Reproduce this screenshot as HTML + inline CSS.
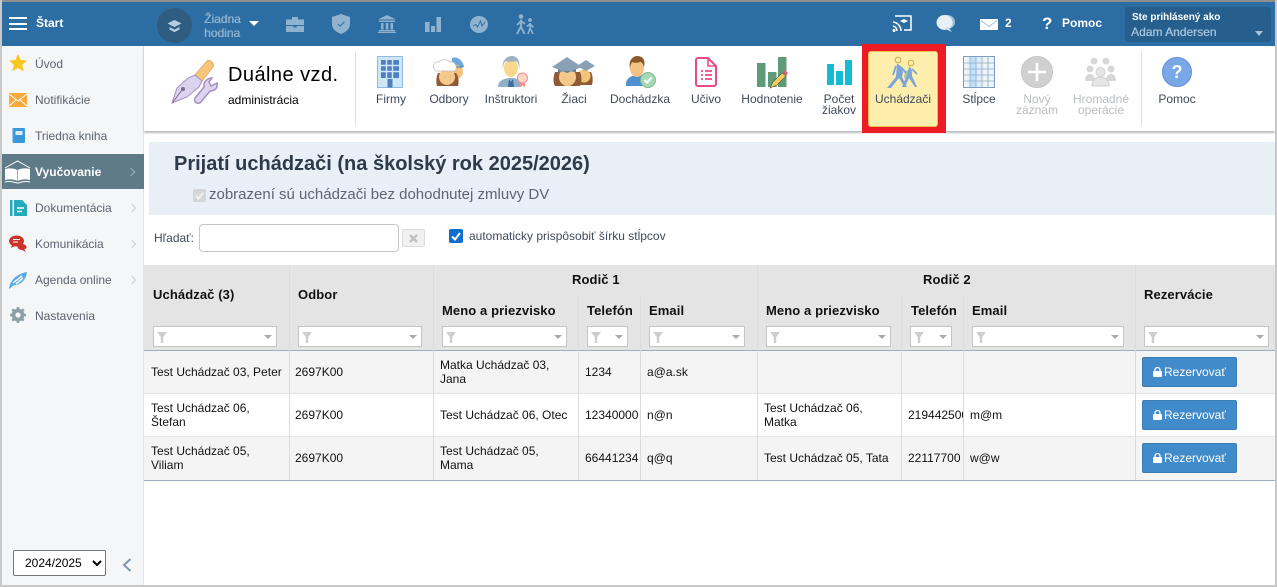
<!DOCTYPE html>
<html lang="sk"><head><meta charset="utf-8"><title>Uchádzači</title>
<style>
*{box-sizing:border-box}
html,body{margin:0;padding:0;width:1277px;height:587px;overflow:hidden;background:#fff;font-family:"Liberation Sans",Arial,sans-serif;color:#000}
.a{position:absolute}
.t{position:absolute;white-space:nowrap;line-height:14px}
svg{position:absolute;overflow:visible}
.side{font-size:12px;color:#5c6370;left:35px}
.rb{position:absolute;font-size:12px;color:#3f4a5a;text-align:center;line-height:12px;transform:translateX(-50%);white-space:nowrap}
.dis{color:#b9bcc0}
.h{position:absolute;font-size:13px;font-weight:bold;color:#111;white-space:nowrap;line-height:15px;letter-spacing:.1px}
.c{position:absolute;font-size:12px;color:#111;line-height:14px;white-space:nowrap}
.f{position:absolute;top:326px;height:21px;background:#fff;border:1px solid #c4c4c4}
.f:before{content:"";position:absolute;left:3px;top:5px;width:10px;height:11px;background:#cdcdcd;clip-path:polygon(0 0,100% 0,62% 45%,62% 100%,38% 100%,38% 45%)}
.f:after{content:"";position:absolute;right:4px;top:8px;border:4px solid transparent;border-top:4px solid #aaa;border-bottom:0}
.v{position:absolute;width:1px;background:#dcdcdc}
.btn{position:absolute;left:1142px;width:95px;height:30px;background:#428bca;border:1px solid #3b7eb6;border-radius:2px;color:#fff;font-size:12px;line-height:28px;padding-left:21px}
.chev{position:absolute;left:129px;width:6px;height:6px;border-top:1px solid #c9ced3;border-right:1px solid #c9ced3;transform:rotate(45deg)}
</style></head><body>
<!-- frame -->
<div class="a" style="left:0;top:0;width:1277px;height:2px;background:#8f8f8f"></div>
<div class="a" style="left:0;top:0;width:2px;height:587px;background:#c9c9c9"></div>
<div class="a" style="left:1275px;top:0;width:2px;height:587px;background:#c9c9c9"></div>
<div class="a" style="left:0;top:585px;width:1277px;height:2px;background:#c9c9c9"></div>
<!-- top bar -->
<div class="a" style="left:2px;top:2px;width:1273px;height:44px;background:#2c6ea3"></div>
<div class="a" style="left:9px;top:17px;width:18px;height:2px;background:#fff"></div>
<div class="a" style="left:9px;top:23px;width:18px;height:2px;background:#fff"></div>
<div class="a" style="left:9px;top:28px;width:18px;height:2px;background:#fff"></div>
<div class="t" style="left:36px;top:16px;font-size:12px;font-weight:bold;color:#fff">Štart</div>
<div class="a" style="left:157px;top:8px;width:35px;height:35px;border-radius:50%;background:#2f5d82"></div>
<svg style="left:157px;top:8px" width="35" height="35"><path d="M17.500 12l7 3.500-7 3.500-7-3.500z" fill="#b9cfe0"/><path d="M12.500 19l5 2.600 5-2.600v2.500l-5 2.600-5-2.600z" fill="#b9cfe0"/></svg>
<div class="t" style="left:204px;top:12px;font-size:12px;color:#8fb2cf;text-shadow:.4px 0 0 #8fb2cf">Žiadna</div>
<div class="t" style="left:204px;top:26px;font-size:12px;color:#8fb2cf;text-shadow:.4px 0 0 #8fb2cf">hodina</div>
<div class="a" style="left:249px;top:21px;border:5px solid transparent;border-top:5px solid #fff;border-bottom:0"></div>
<svg style="left:286px;top:17px" width="18" height="15"><path d="M6 2.500V0h6v2.500h6V8H0V2.500z" fill="#8fb2cf"/><path d="M0 9h7.500v1.500h3V9H18v6H0z" fill="#8fb2cf"/></svg>
<svg style="left:332px;top:14px" width="18" height="20"><path d="M9 0l9 3v7c0 5-4 8-9 10C4 18 0 15 0 10V3z" fill="#8fb2cf"/><path d="M6 10l2.200 2.200L12.500 7.500" stroke="#2c6ea3" fill="none"/></svg>
<svg style="left:378px;top:15px" width="18" height="18"><path d="M9 0l9 4.500H0zM1 5.500h16V7H1zM3 8h2.500v6.500H3zM7.800 8h2.500v6.500H7.800zM12.500 8H15v6.500h-2.500zM1 15h16v1.300H1zM0 16.700h18V18H0z" fill="#8fb2cf"/></svg>
<svg style="left:425px;top:17px" width="16" height="15"><path d="M0 5h4.500v10H0zM6 9h4v6H6zM11.500 0H16v15h-4.500z" fill="#8fb2cf"/></svg>
<svg style="left:470px;top:16px" width="18" height="17"><ellipse cx="9" cy="8.500" rx="9" ry="8.500" fill="#8fb2cf"/><path d="M3 10l3-1.500 1.500 2.500 3-6 1.500 5 3-4" fill="none" stroke="#2c6ea3" stroke-width=".9"/></svg>
<svg style="left:515px;top:14px" width="20" height="20" fill="none" stroke="#8fb2cf"><circle cx="6" cy="2.500" r="2.300" fill="#8fb2cf" stroke="none"/><circle cx="15" cy="6" r="1.900" fill="#8fb2cf" stroke="none"/><path d="M6 5.500v7.500M6 7l-4 4M6 7l4 3M6 12.500l-4 7.500M6 12.500l3.500 7.500" stroke-width="1.900"/><path d="M15 9v5M15 10l-3 2.500M15 10l3.500 3.500M15 14l-2 6M15 14l3 6" stroke-width="1.600"/></svg>
<svg style="left:892px;top:15px" width="20" height="19"><path d="M3 1h16v14h-7" fill="none" stroke="#fff" stroke-width="1.500"/><path d="M1 7a9 9 0 0 1 8 9M1 11a5 5 0 0 1 4 5" stroke="#fff" fill="none" stroke-width="1.500"/><circle cx="2" cy="15.500" r="1.500" fill="#fff"/><path d="M12 4l4 2-4 2-4-2z" fill="#fff"/></svg>
<svg style="left:936px;top:14px" width="19" height="19"><ellipse cx="11" cy="8" rx="8" ry="7" fill="#9fc1dc"/><ellipse cx="8.500" cy="8.500" rx="8" ry="7.500" fill="#e6f0f7"/><path d="M12 13l4 5-7-3z" fill="#c7dcea"/></svg>
<svg style="left:980px;top:19px" width="18" height="11"><rect width="18" height="11" fill="#fff"/><path d="M1 1.500l8 6 8-6" fill="none" stroke="#9fc1dc"/></svg>
<div class="t" style="left:1005px;top:16px;font-size:12px;font-weight:bold;color:#fff">2</div>
<div class="t" style="left:1042px;top:17px;font-size:17px;font-weight:bold;color:#fff">?</div>
<div class="t" style="left:1062px;top:16px;font-size:12px;font-weight:bold;color:#fff">Pomoc</div>
<div class="a" style="left:1125px;top:7px;width:146px;height:35px;background:#265f8d;border-radius:3px"></div>
<div class="t" style="left:1132px;top:11px;font-size:10px;font-weight:bold;color:#fff">Ste prihlásený ako</div>
<div class="t" style="left:1131px;top:25px;font-size:12px;color:#a5c4dd;text-shadow:.3px 0 0 #a5c4dd">Adam Andersen</div>
<div class="a" style="left:1255px;top:31px;border:4px solid transparent;border-top:5px solid #a5c4dd;border-bottom:0"></div>
<!-- sidebar -->
<div class="a" style="left:2px;top:46px;width:141px;height:539px;background:#f5f6f8"></div>
<div class="a" style="left:143px;top:46px;width:1px;height:539px;background:#e3e3e3"></div>
<svg style="left:9px;top:54px" width="18" height="18"><path d="M9 0l2.700 6 6.300.6-4.800 4.200 1.500 6.500L9 14l-5.700 3.300 1.500-6.500L0 6.600 6.300 6z" fill="#f7c71b"/></svg>
<div class="t side" style="top:57px">Úvod</div>
<svg style="left:9px;top:93px" width="18" height="14"><rect width="18" height="14" fill="#f7a83a"/><path d="M0 1l9 7 9-7M0 13l7-6M18 13l-7-6" fill="none" stroke="#fff"/></svg>
<div class="t side" style="top:93px">Notifikácie</div>
<svg style="left:12px;top:128px" width="13" height="15"><rect x=".5" width="12.500" height="15" rx="1" fill="#3b97dc"/><rect x="3.500" y="3" width="7" height="4" fill="#d7ecfa"/><path d="M0 2h1.500M0 5h1.500M0 8h1.500M0 11h1.500M0 13.500h1.500" stroke="#8fc6ee"/></svg>
<div class="t side" style="top:129px">Triedna kniha</div>
<div class="a" style="left:2px;top:154px;width:142px;height:35px;background:#5f7b89"></div>
<svg style="left:4px;top:160px" width="27" height="24"><path d="M1 8L13.500 1 26 8" fill="none" stroke="#fff"/><path d="M1 9c4-1 9-1 12.200 1v11C10 19 5 19 1 20zM26 9c-4-1-9-1-12.200 1v11C17 19 22 19 26 20z" fill="#fff"/><path d="M1 22c4-1 9 0 12 1h1c3-1 8-2 12-1" stroke="#fff" fill="none"/></svg>
<div class="t" style="left:35px;top:165px;font-size:12px;font-weight:bold;color:#fff">Vyučovanie</div>
<div class="chev" style="top:169px;left:128px;border-color:#9fb2bc"></div>
<svg style="left:10px;top:200px" width="17" height="16"><rect width="2.500" height="16" fill="#24a9bd"/><path d="M4 0h8l5 5v11H4z" fill="#24a9bd"/><path d="M7 8h7M7 11.500h5" stroke="#fff" stroke-width="1.500"/></svg>
<div class="t side" style="top:201px">Dokumentácia</div>
<div class="chev" style="top:205px"></div>
<svg style="left:9px;top:235px" width="18" height="18"><ellipse cx="7.500" cy="6" rx="7.500" ry="5.500" fill="#c9342b"/><path d="M3 10l-1 3 4-2z" fill="#c9342b"/><ellipse cx="13" cy="12" rx="4.500" ry="3" fill="#c9342b"/><path d="M15 14l2 3-4-2z" fill="#c9342b"/><path d="M4 4.500h7M4 7h5" stroke="#fff"/></svg>
<div class="t side" style="top:237px">Komunikácia</div>
<div class="chev" style="top:241px"></div>
<svg style="left:9px;top:272px" width="18" height="17"><path d="M0 17C1 8 8 2 18 0 17 8 12 13 4 13.500L1.500 16z" fill="#58a9e4"/><path d="M4 11l9-7M7 12l7-6" stroke="#f5f6f8" stroke-width="1.500"/></svg>
<div class="t side" style="top:273px">Agenda online</div>
<div class="chev" style="top:277px"></div>
<svg style="left:10px;top:307px" width="16" height="16"><circle cx="8" cy="8" r="4.500" fill="none" stroke="#8e9ea5" stroke-width="3.800"/><path d="M8 0v16M0 8h16M2.300 2.300l11.400 11.400M13.700 2.300L2.300 13.700" stroke="#8e9ea5" stroke-width="2.600" stroke-dasharray="2.600 10.800"/></svg>
<div class="t side" style="top:309px">Nastavenia</div>
<select style="position:absolute;left:13px;top:550px;width:93px;height:26px;font:12px 'Liberation Sans',sans-serif;padding-left:7px;background:#fff;border:1px solid #767676;border-radius:2px;color:#000"><option>2024/2025</option></select>
<svg style="left:122px;top:558px" width="10" height="14"><path d="M8.500 1L2 7l6.500 6" fill="none" stroke="#7f98ad" stroke-width="2"/></svg>
<!-- ribbon -->
<div class="a" style="left:144px;top:46px;width:1131px;height:85px;background:#fff;box-shadow:0 2px 2px #bbb"></div>
<svg style="left:172px;top:59px" width="46" height="45"><path d="M35 2c3-2 8 2 6 6L30 22l-7-6z" fill="#f6c67a" stroke="#e2b066"/><path d="M23 16l7 6-3 6-12 10-15 6 5-15 11-10z" fill="#dcd3ee" stroke="#a58fc0"/><circle cx="11" cy="30" r="2" fill="#7d6a9a"/><path d="M1 43l9-12" stroke="#7d6a9a"/><path d="M45 24c1 5-2 8-7 8L29 43c-3 3-8 0-6-4l9-11c-1-5 3-9 8-9l-3 4 2 4z" fill="#dcd3ee" stroke="#a58fc0" stroke-width="1.500"/></svg>
<div class="t" style="left:228px;top:64px;font-size:20px;line-height:23px;color:#000;letter-spacing:.45px">Duálne vzd.</div>
<div class="t" style="left:228px;top:93px;font-size:12px;color:#000">administrácia</div>
<div class="a" style="left:355px;top:51px;width:1px;height:75px;background:#e0e0e0"></div>
<!-- Firmy -->
<svg style="left:377px;top:56px" width="26" height="32"><rect x=".5" y=".5" width="25" height="31" fill="#cfe6f7" stroke="#8fbce0"/><rect x="4" y="4" width="18" height="18" fill="#4f7fbd"/><path d="M9.500 4v18M15.500 4v18M4 9.500h18M4 15.500h18" stroke="#cfe6f7" stroke-width="1.500"/><rect x="10.500" y="23" width="5" height="8.500" fill="#4f7fbd"/></svg>
<div class="rb" style="left:391px;top:93px">Firmy</div>
<!-- Odbory -->
<svg style="left:433px;top:56px" width="32" height="32"><path d="M19 2c5-2 11 2 12 9h-13z" fill="#6ea8e0"/><circle cx="23" cy="16" r="7" fill="#f2c37a"/><path d="M17 11h13" stroke="#3f6fa5"/><path d="M5 17c-2 4-2 10-1 13h21c1-4 1-9-2-13z" fill="#8f5b34"/><circle cx="14" cy="21" r="8" fill="#f5c98a"/><path d="M11 21h.1M17 21h.1" stroke="#444" stroke-width="2"/><path d="M3 15C-2 11 1 5 6 6c2-3 9-3 11 0 5-1 8 5 5 9z" fill="#fff" stroke="#bbb" stroke-width=".7"/></svg>
<div class="rb" style="left:449px;top:93px">Odbory</div>
<!-- Instruktori -->
<svg style="left:498px;top:56px" width="30" height="32"><path d="M0 31c0-6 5-9 13-9s10 3 10 9z" fill="#8fb0c6"/><path d="M11 23l2 3 2-3 1 8h-6z" fill="#3d6da5"/><ellipse cx="13" cy="12" rx="7" ry="9" fill="#f8d98c"/><path d="M5 14C3 3 10 0 14 0s9 3 7 14c0-5-1-8-3-9-3 1-8 1-10 0-2 1-3 4-3 9z" fill="#9fb2c0"/><path d="M22 26v5l2.500-1.500L27 31v-5z" fill="#ef8f8f"/><circle cx="24.500" cy="22" r="5" fill="#fbd7c7" stroke="#ef8f8f"/></svg>
<div class="rb" style="left:511px;top:93px">Inštruktori</div>
<!-- Ziaci -->
<svg style="left:552px;top:56px" width="44" height="31"><path d="M24 16c-1 5 0 10 2 13h14c1-4 1-9-1-13z" fill="#8f5b34"/><circle cx="32" cy="20" r="6.500" fill="#f2c37a"/><path d="M25 10l9-6 9 6-9 5z" fill="#8aa0b5"/><path d="M3 16c-2 5-2 11 0 14h25c2-4 2-10 0-14z" fill="#8f5b34"/><ellipse cx="15.500" cy="21" rx="8.500" ry="9" fill="#f5c98a"/><path d="M12 21h.1M19 21h.1" stroke="#444" stroke-width="2"/><path d="M0 11L15 1l15 10-15 6z" fill="#8aa0b5"/><path d="M6 13v4c5-3 13-3 18 0v-4l-9 4z" fill="#6b8196"/></svg>
<div class="rb" style="left:574px;top:93px">Žiaci</div>
<!-- Dochadzka -->
<svg style="left:625px;top:56px" width="32" height="32"><path d="M1 28c0-6 6-9 12-9 5 0 9 2 10 5l-3 6H1z" fill="#4f90d0"/><ellipse cx="12" cy="12" rx="7" ry="9" fill="#f3c285"/><path d="M5 13C3 4 8 0 12 0c5 0 9 3 7 11-1-3-2-5-4-5-3 1-6 1-8 0-1 2-2 4-2 7z" fill="#8b5a2b"/><circle cx="23" cy="24" r="7.500" fill="#a9d8b6" stroke="#7db98d"/><path d="M19.500 24l2.500 2.500 4.500-5" stroke="#fff" fill="none" stroke-width="2"/></svg>
<div class="rb" style="left:640px;top:93px">Dochádzka</div>
<!-- Ucivo -->
<svg style="left:695px;top:57px" width="22" height="30"><path d="M1 3a2 2 0 0 1 2-2h10l8 8v18a2 2 0 0 1-2 2H3a2 2 0 0 1-2-2z" fill="#fff" stroke="#ec4a86" stroke-width="2"/><path d="M13 1v8h8" fill="none" stroke="#ec4a86" stroke-width="1.600"/><path d="M6 14h2M6 18h2M6 22h2M10 14h7M10 18h7M10 22h7" stroke="#ec4a86" stroke-width="1.800"/></svg>
<div class="rb" style="left:706px;top:93px">Učivo</div>
<!-- Hodnotenie -->
<svg style="left:757px;top:57px" width="31" height="31"><path d="M0 6h8.500v24H0zM11 15h8.500v15H11zM21 0h8.500v30H21z" fill="#5e9b76"/><path d="M13 31l3-6 9-9 4 3-9 9z" fill="#f6cd58" stroke="#555" stroke-width=".6"/><path d="M26 15l2-2 3 3-2 3z" fill="#e0607c"/></svg>
<div class="rb" style="left:772px;top:93px">Hodnotenie</div>
<!-- Pocet -->
<svg style="left:827px;top:60px" width="25" height="25"><path d="M0 4h7v21H0zM9 11h7v14H9zM18 0h7v25h-7z" fill="#12bcd4"/></svg>
<div class="rb" style="left:839px;top:93px">Počet</div>
<div class="rb" style="left:839px;top:104px">žiakov</div>
<!-- Uchadzaci highlight -->
<div class="a" style="left:862px;top:44px;width:84px;height:89px;background:#ed1c24"></div>
<div class="a" style="left:868px;top:51px;width:70px;height:76px;background:#fdeeae;border:1px solid #f0c04e;border-radius:3px"></div>
<svg style="left:886px;top:57px" width="32" height="31" fill="none"><path d="M26 18c-2-4-5-5-7-4l-1 7 3 1z" fill="#a8d08d"/><circle cx="12" cy="3" r="2.800" stroke="#d9a441" fill="#fdeeae"/><circle cx="25" cy="6" r="2.800" stroke="#d9a441" fill="#fdeeae"/><path d="M11 7c3 0 5 4 6 8l-1 5 5 10h-2.500L13 21 5 31H1l9-11z" fill="#7aa5dc"/><path d="M10 9L7 18M15 10l5 6" stroke="#7aa5dc" stroke-width="1.800"/><path d="M23 10c3 0 3 6 3 9l5 11h-2l-6-9-4 9h-3l5-12z" fill="#7aa5dc"/><path d="M26 12l5 5" stroke="#7aa5dc" stroke-width="1.800"/></svg>
<div class="rb" style="left:903px;top:93px">Uchádzači</div>
<!-- Stlpce -->
<svg style="left:963px;top:56px" width="32" height="32"><rect x=".5" y=".5" width="31" height="31" fill="#eef3f7" stroke="#7f9fc0"/><path d="M7 1h12v30H7z" fill="#bfe0f8"/><path d="M13 1h6v30h-6z" fill="#d9edfb"/><path d="M7 1v30M13 1v30M19 1v30M25 1v30M1 7h30M1 13h30M1 19h30M1 25h30" stroke="#8facc8" stroke-width=".8"/></svg>
<div class="rb" style="left:979px;top:93px">Stĺpce</div>
<!-- Novy -->
<svg style="left:1021px;top:56px" width="32" height="32"><circle cx="16" cy="16" r="15.500" fill="#d0d0d0" stroke="#c4c4c4"/><path d="M16 7v18M7 16h18" stroke="#fff" stroke-width="2.500"/></svg>
<div class="rb dis" style="left:1037px;top:93px">Nový</div>
<div class="rb dis" style="left:1037px;top:104px">záznam</div>
<!-- Hromadne -->
<svg style="left:1085px;top:57px" width="32" height="30" fill="#d7d7d7"><circle cx="9" cy="4" r="3.500"/><circle cx="21" cy="4" r="3.500"/><circle cx="5" cy="12" r="3.500"/><circle cx="26" cy="12" r="3.500"/><path d="M0 24c0-5 2-7 5-7s5 2 5 7zM21 24c0-5 2-7 5-7s5 2 5 7z"/><circle cx="15.500" cy="15" r="4.500" fill="#e5e5e5" stroke="#d0d0d0"/><path d="M7 29c0-6 4-9 8.500-9s8.500 3 8.500 9z" fill="#e5e5e5" stroke="#d0d0d0"/></svg>
<div class="rb dis" style="left:1101px;top:93px">Hromadné</div>
<div class="rb dis" style="left:1101px;top:104px">operácie</div>
<div class="a" style="left:1141px;top:51px;width:1px;height:75px;background:#e0e0e0"></div>
<!-- Pomoc -->
<div class="a" style="left:1162px;top:57px;width:30px;height:30px;border-radius:50%;background:#7aa7e6;border:1px solid #5f8fd2;color:#fff;font:bold 18px/28px 'Liberation Sans',sans-serif;text-align:center">?</div>
<div class="rb" style="left:1177px;top:93px">Pomoc</div>
<!-- title band -->
<div class="a" style="left:149px;top:142px;width:1126px;height:73px;background:#e8eff6"></div>
<div class="t" style="left:174px;top:153px;font-size:20px;line-height:23px;font-weight:bold;color:#2d3a4a">Prijatí uchádzači (na školský rok 2025/2026)</div>
<div class="a" style="left:193px;top:189px;width:13px;height:13px;background:#d3d6d9;border-radius:2px"></div>
<svg style="left:193px;top:189px" width="13" height="13"><path d="M3 7l2.500 2.500L10 4" fill="none" stroke="#f0f2f4" stroke-width="2"/></svg>
<div class="t" style="left:209px;top:186px;font-size:15px;line-height:17px;color:#5b6672">zobrazení sú uchádzači bez dohodnutej zmluvy DV</div>
<!-- search -->
<div class="t" style="left:154px;top:231px;font-size:12px;color:#3f4a5a">Hľadať:</div>
<div class="a" style="left:199px;top:224px;width:200px;height:28px;background:#fff;border:1px solid #c6c6c6;border-radius:4px"></div>
<div class="a" style="left:402px;top:229px;width:23px;height:18px;background:#f1f1f1;border:1px solid #dcdcdc;border-radius:2px"></div>
<svg style="left:409px;top:234px" width="9" height="9"><path d="M1 1l7 7M8 1L1 8" stroke="#c0c0c0" stroke-width="2.400"/></svg>
<div class="a" style="left:449px;top:229px;width:14px;height:14px;background:#0f6fd0;border-radius:2px"></div>
<svg style="left:449px;top:229px" width="14" height="14"><path d="M3 7.500l3 3L11 4" fill="none" stroke="#fff" stroke-width="2"/></svg>
<div class="t" style="left:469px;top:229px;font-size:12px;color:#3f4a5a">automaticky prispôsobiť šírku stĺpcov</div>
<!-- table header -->
<div class="a" style="left:144px;top:265px;width:1131px;height:85px;background:#e4e4e4"></div>
<div class="a" style="left:144px;top:350px;width:1131px;height:1px;background:#a0aec0"></div>
<div class="a" style="left:144px;top:351px;width:1131px;height:42px;background:#f4f4f4"></div>
<div class="a" style="left:144px;top:393px;width:1131px;height:1px;background:#e4e4e4"></div>
<div class="a" style="left:144px;top:436px;width:1131px;height:1px;background:#e4e4e4"></div>
<div class="a" style="left:144px;top:437px;width:1131px;height:43px;background:#f4f4f4"></div>
<div class="a" style="left:144px;top:480px;width:1131px;height:1px;background:#a0aec0"></div>
<div class="v" style="left:289px;top:265px;height:215px"></div>
<div class="v" style="left:433px;top:265px;height:215px"></div>
<div class="v" style="left:578px;top:295px;height:185px"></div>
<div class="v" style="left:640px;top:295px;height:185px"></div>
<div class="v" style="left:757px;top:265px;height:215px"></div>
<div class="v" style="left:901px;top:295px;height:185px"></div>
<div class="v" style="left:963px;top:295px;height:185px"></div>
<div class="v" style="left:1135px;top:265px;height:215px"></div>
<div class="h" style="left:572px;top:272px">Rodič 1</div>
<div class="h" style="left:923px;top:272px">Rodič 2</div>
<div class="h" style="left:153px;top:287px">Uchádzač (3)</div>
<div class="h" style="left:298px;top:287px">Odbor</div>
<div class="h" style="left:1144px;top:287px">Rezervácie</div>
<div class="h" style="left:442px;top:303px">Meno a priezvisko</div>
<div class="h" style="left:587px;top:303px">Telefón</div>
<div class="h" style="left:649px;top:303px">Email</div>
<div class="h" style="left:766px;top:303px">Meno a priezvisko</div>
<div class="h" style="left:911px;top:303px">Telefón</div>
<div class="h" style="left:972px;top:303px">Email</div>
<div class="f" style="left:153px;width:124px"></div>
<div class="f" style="left:298px;width:124px"></div>
<div class="f" style="left:442px;width:125px"></div>
<div class="f" style="left:587px;width:41px"></div>
<div class="f" style="left:649px;width:96px"></div>
<div class="f" style="left:766px;width:125px"></div>
<div class="f" style="left:910px;width:42px"></div>
<div class="f" style="left:972px;width:152px"></div>
<div class="f" style="left:1144px;width:125px"></div>
<!-- rows -->
<div class="c" style="left:151px;top:365px">Test Uchádzač 03, Peter</div>
<div class="c" style="left:295px;top:365px">2697K00</div>
<div class="c" style="left:440px;top:358px">Matka Uchádzač 03,<br>Jana</div>
<div class="c" style="left:585px;top:365px">1234</div>
<div class="c" style="left:647px;top:365px">a@a.sk</div>
<div class="btn" style="top:357px"><svg style="left:10px;top:9px" width="9" height="10"><path d="M2 4.500V3a2.500 2.500 0 0 1 5 0v1.500" fill="none" stroke="#fff" stroke-width="1.300"/><rect y="4" width="9" height="6" rx="1" fill="#fff"/></svg>Rezervovať</div>
<div class="c" style="left:151px;top:401px">Test Uchádzač 06,<br>Štefan</div>
<div class="c" style="left:295px;top:408px">2697K00</div>
<div class="c" style="left:440px;top:408px">Test Uchádzač 06, Otec</div>
<div class="c" style="left:585px;top:408px">12340000</div>
<div class="c" style="left:647px;top:408px">n@n</div>
<div class="c" style="left:764px;top:401px">Test Uchádzač 06,<br>Matka</div>
<div class="c" style="left:908px;top:408px;width:55px;overflow:hidden">219442500</div>
<div class="c" style="left:970px;top:408px">m@m</div>
<div class="btn" style="top:400px"><svg style="left:10px;top:9px" width="9" height="10"><path d="M2 4.500V3a2.500 2.500 0 0 1 5 0v1.500" fill="none" stroke="#fff" stroke-width="1.300"/><rect y="4" width="9" height="6" rx="1" fill="#fff"/></svg>Rezervovať</div>
<div class="c" style="left:151px;top:444px">Test Uchádzač 05,<br>Viliam</div>
<div class="c" style="left:295px;top:451px">2697K00</div>
<div class="c" style="left:440px;top:444px">Test Uchádzač 05,<br>Mama</div>
<div class="c" style="left:585px;top:451px">66441234</div>
<div class="c" style="left:647px;top:451px">q@q</div>
<div class="c" style="left:764px;top:451px">Test Uchádzač 05, Tata</div>
<div class="c" style="left:908px;top:451px">22117700</div>
<div class="c" style="left:970px;top:451px">w@w</div>
<div class="btn" style="top:443px"><svg style="left:10px;top:9px" width="9" height="10"><path d="M2 4.500V3a2.500 2.500 0 0 1 5 0v1.500" fill="none" stroke="#fff" stroke-width="1.300"/><rect y="4" width="9" height="6" rx="1" fill="#fff"/></svg>Rezervovať</div>
</body></html>
